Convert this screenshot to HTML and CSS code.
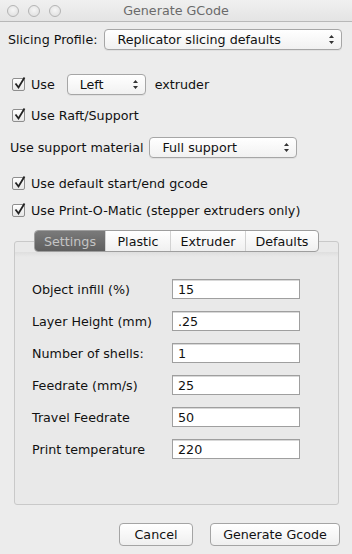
FILE: index.html
```html
<!DOCTYPE html>
<html lang="en">
<head>
<meta charset="UTF-8">
<title>Generate GCode</title>
<link rel="stylesheet" href="styles.css">
</head>
<body>
<div class="window">
  <div class="titlebar">
    <div class="lights">
      <span class="light"></span>
      <span class="light"></span>
      <span class="light"></span>
    </div>
    <div class="title">Generate GCode</div>
  </div>

  <div class="row row-profile">
    <span class="label">Slicing Profile:</span>
    <div class="popup popup-profile">
      <span>Replicator slicing defaults</span>
      <svg class="arrows" width="7" height="11" viewBox="0 0 7 11"><path d="M3.5 1 L6 4 H1 Z M3.5 10 L6 7 H1 Z" fill="#333"/></svg>
    </div>
  </div>

  <div class="row row-extruder">
    <span class="check"><svg width="13" height="13" viewBox="0 0 13 13"><path d="M2.5 6.5 L5.5 10.5 L11.5 0.5" fill="none" stroke="#222" stroke-width="1.8"/></svg></span>
    <span class="label">Use</span>
    <div class="popup popup-left">
      <span>Left</span>
      <svg class="arrows" width="7" height="11" viewBox="0 0 7 11"><path d="M3.5 1 L6 4 H1 Z M3.5 10 L6 7 H1 Z" fill="#333"/></svg>
    </div>
    <span class="label">extruder</span>
  </div>

  <div class="row row-raft">
    <span class="check"><svg width="13" height="13" viewBox="0 0 13 13"><path d="M2.5 6.5 L5.5 10.5 L11.5 0.5" fill="none" stroke="#222" stroke-width="1.8"/></svg></span>
    <span class="label">Use Raft/Support</span>
  </div>

  <div class="row row-support">
    <span class="label">Use support material</span>
    <div class="popup popup-support">
      <span>Full support</span>
      <svg class="arrows" width="7" height="11" viewBox="0 0 7 11"><path d="M3.5 1 L6 4 H1 Z M3.5 10 L6 7 H1 Z" fill="#333"/></svg>
    </div>
  </div>

  <div class="row row-gcode">
    <span class="check"><svg width="13" height="13" viewBox="0 0 13 13"><path d="M2.5 6.5 L5.5 10.5 L11.5 0.5" fill="none" stroke="#222" stroke-width="1.8"/></svg></span>
    <span class="label">Use default start/end gcode</span>
  </div>

  <div class="row row-pom">
    <span class="check"><svg width="13" height="13" viewBox="0 0 13 13"><path d="M2.5 6.5 L5.5 10.5 L11.5 0.5" fill="none" stroke="#222" stroke-width="1.8"/></svg></span>
    <span class="label">Use Print-O-Matic (stepper extruders only)</span>
  </div>

  <div class="tabbox">
    <div class="tabs">
      <span class="tab tab-active">Settings</span>
      <span class="tab">Plastic</span>
      <span class="tab">Extruder</span>
      <span class="tab">Defaults</span>
    </div>
    <div class="band"></div>
    <div class="fields">
      <div class="field"><span class="flabel">Object infill (%)</span><span class="input">15</span></div>
      <div class="field"><span class="flabel">Layer Height (mm)</span><span class="input">.25</span></div>
      <div class="field"><span class="flabel">Number of shells:</span><span class="input">1</span></div>
      <div class="field"><span class="flabel">Feedrate (mm/s)</span><span class="input">25</span></div>
      <div class="field"><span class="flabel">Travel Feedrate</span><span class="input">50</span></div>
      <div class="field"><span class="flabel">Print temperature</span><span class="input">220</span></div>
    </div>
  </div>

  <div class="buttons">
    <button class="btn btn-cancel">Cancel</button>
    <button class="btn btn-generate">Generate Gcode</button>
  </div>
</div>
</body>
</html>
```

FILE: styles.css
```css
html, body { margin: 0; padding: 0; }
body { background: #ececec; font-family: 'DejaVu Sans', 'Liberation Sans', sans-serif; font-size: 12.7px; color: #111; width: 352px; height: 554px; overflow: hidden; }
.window { display: flex; flex-direction: column; }

.titlebar { height: 21px; border-bottom: 1px solid #b8b8b8; background: linear-gradient(#f0f0f0, #e4e4e4); display: flex; align-items: center; position: relative; }
.lights { display: flex; gap: 9px; padding-left: 7px; }
.light { width: 10px; height: 10px; border-radius: 50%; border: 1px solid #b4b4b4; background: radial-gradient(circle at 50% 40%, #f6f6f6, #dcdcdc); }
.title { position: absolute; left: 0; right: 0; text-align: center; color: #6a6a6a; font-size: 12.7px; }

.row { display: flex; align-items: center; height: 21px; }
.row-profile { margin-top: 7px; padding-left: 8px; }
.row-extruder { margin-top: 24px; padding-left: 12px; }
.row-raft { margin-top: 10px; padding-left: 12px; }
.row-support { margin-top: 11px; padding-left: 10px; }
.row-gcode { margin-top: 15px; padding-left: 12px; }
.row-pom { margin-top: 6px; padding-left: 12px; }

.check { width: 13px; height: 13px; border: 1px solid #8e8e8e; border-radius: 2px; background: linear-gradient(#ffffff, #e6e6e6); margin-right: 6px; position: relative; box-sizing: border-box; }
.check svg { position: absolute; left: 0; top: -2px; }

.popup { box-sizing: border-box; height: 21px; border: 1px solid #a6a6a6; border-radius: 4px; background: linear-gradient(#ffffff, #f1f1f1); display: flex; align-items: center; justify-content: space-between; padding: 0 6px 0 12px; box-shadow: 0 1px 0 rgba(0,0,0,0.05); }
.popup-profile { margin-left: 7px; width: 238px; }
.popup-left { margin-left: 12px; margin-right: 9px; width: 79px; }
.popup-support { margin-left: 6px; width: 148px; }

.tabbox { margin: 20px 13px 0 14px; height: 262px; border: 1px solid #c9c9c9; border-radius: 3px; background: #e9e9e9; display: flex; flex-direction: column; }
.tabs { display: flex; align-self: center; margin-top: -12px; height: 22px; border: 1px solid #9e9e9e; border-radius: 4px; background: linear-gradient(#ffffff, #f0f0f0); overflow: hidden; box-sizing: border-box; }
.tab { display: flex; align-items: center; justify-content: center; border-left: 1px solid #d2d2d2; color: #111; }
.tab:nth-child(1) { width: 70px; border-left: none; }
.tab:nth-child(2) { width: 64px; }
.tab:nth-child(3) { width: 74px; }
.tab:nth-child(4) { width: 72px; }
.tab-active { background: linear-gradient(#7a7a7a, #5f5f5f); color: #c4c4c4; }
.band { height: 5px; background: linear-gradient(#dedede, #e9e9e9); }

.fields { display: flex; flex-direction: column; gap: 12px; padding: 22px 0 0 17px; }
.field { display: flex; align-items: center; height: 20px; }
.flabel { width: 140px; }
.input { box-sizing: border-box; width: 128px; height: 20px; border: 1px solid #9f9f9f; background: #fff; padding-left: 5px; display: flex; align-items: center; box-shadow: inset 0 1px 0 #d8d8d8; }

.buttons { display: flex; justify-content: flex-end; gap: 17px; margin-top: 18px; padding-right: 12px; }
.btn { font-family: inherit; font-size: 12.7px; color: #111; height: 23px; border: 1px solid #a4a4a4; border-radius: 4px; background: linear-gradient(#ffffff, #efefef); padding: 0; }
.btn-cancel { width: 74px; }
.btn-generate { width: 130px; }
```
